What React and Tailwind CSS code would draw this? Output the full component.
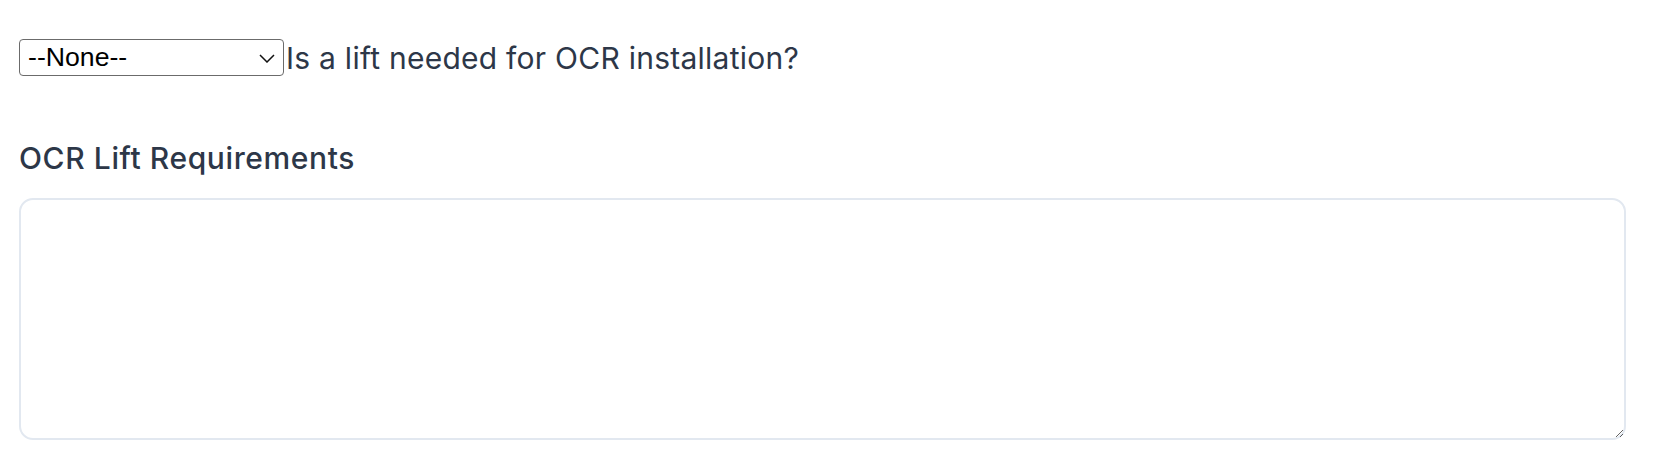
import React from "react";

const App = () => {
  return (
    <div className="min-h-[476px] w-[1656px] bg-white pl-[19px] pr-[30px] pt-[39px] font-['Inter',sans-serif]">
      {/* Question row */}
      <div className="flex items-start">
        <div className="relative">
          <select
            defaultValue=""
            className="block h-[37px] w-[265px] appearance-none rounded-[4px] border border-[#6b6b6b] bg-white pl-[8px] font-['Liberation_Sans',Arial,sans-serif] text-[26.67px] leading-none text-black outline-none"
          >
            <option value="">--None--</option>
            <option value="yes">Yes</option>
            <option value="no">No</option>
          </select>
          <svg
            className="pointer-events-none absolute right-[9px] top-[15px]"
            width="16"
            height="9"
            viewBox="0 0 16 9"
            fill="none"
            stroke="#111"
            strokeWidth="1.5"
          >
            <path d="M1 1l7 7 7-7" />
          </svg>
        </div>
        <label className="ml-[2px] pt-[1px] text-[30px] leading-[37px] tracking-[0.25px] text-[#2d3748]">
          Is a lift needed for OCR installation?
        </label>
      </div>

      {/* Requirements */}
      <div className="mt-[59px]">
        <h3 className="text-[30px] leading-[45px] font-medium tracking-[0.6px] text-[#2d3748]">OCR Lift Requirements</h3>
        <textarea className="mt-[17px] block h-[242px] w-[1607px] rounded-[14px] border-2 border-[#e2e8f0] bg-white p-3 text-[28px] outline-none" />
      </div>
    </div>
  );
};

export default App;
